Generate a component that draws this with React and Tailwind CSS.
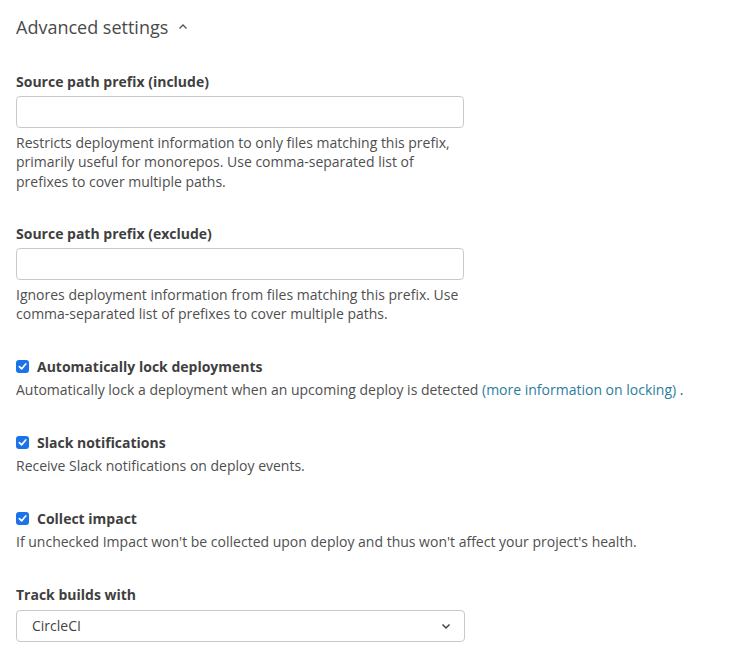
import React from 'react';

const Check = ({ label }) => (
    <label className="flex items-center gap-[8px] font-bold text-[14px] text-[#3f3f3f]">
        <span className="w-[13px] h-[13px] rounded-[3px] bg-[#1a73e8] flex items-center justify-center">
            <svg width="9" height="9" viewBox="0 0 10 10" fill="none">
                <path d="M1.5 5.2 L4 7.6 L8.6 2.2" stroke="white" strokeWidth="1.9" strokeLinecap="round" strokeLinejoin="round" />
            </svg>
        </span>
        {label}
    </label>
);

const App = () => {
    return (
        <div className="px-[16px] pt-[13px] text-[#4f4f4f] text-[14px] leading-[19.5px]" style={{ fontFamily: '"Open Sans", sans-serif' }}>
            <div className="flex items-center gap-[10px] text-[18px] leading-[28px] text-[#4a4a4a]">
                <span>Advanced settings</span>
                <svg width="10" height="8" viewBox="0 0 10 8" fill="none">
                    <path d="M1.5 5.5 L5 2 L8.5 5.5" stroke="#555" strokeWidth="1.3" />
                </svg>
            </div>

            {/* include */}
            <div className="mt-[31px]">
                <div className="font-bold text-[#3f3f3f]">Source path prefix (include)</div>
                <input type="text" className="block mt-[4px] w-[448px] h-[32px] border border-[#c9c9c9] rounded-[4px] bg-white" />
                <p className="mt-[5px] w-[440px]">
                    Restricts deployment information to only files matching this prefix, primarily useful for monorepos. Use comma-separated list of prefixes to cover multiple paths.
                </p>
            </div>

            {/* exclude */}
            <div className="mt-[33px]">
                <div className="font-bold text-[#3f3f3f]">Source path prefix (exclude)</div>
                <input type="text" className="block mt-[4px] w-[448px] h-[32px] border border-[#c9c9c9] rounded-[4px] bg-white" />
                <p className="mt-[5px] w-[450px]">
                    Ignores deployment information from files matching this prefix. Use comma-separated list of prefixes to cover multiple paths.
                </p>
            </div>

            <div className="mt-[33px]">
                <Check label="Automatically lock deployments" />
                <p className="mt-[4px]">
                    Automatically lock a deployment when an upcoming deploy is detected{' '}
                    <a className="text-[#2b7d9c]">(more information on locking)</a> .
                </p>
            </div>

            <div className="mt-[33px]">
                <Check label="Slack notifications" />
                <p className="mt-[4px]">Receive Slack notifications on deploy events.</p>
            </div>

            <div className="mt-[33px]">
                <Check label="Collect impact" />
                <p className="mt-[4px]">If unchecked Impact won't be collected upon deploy and thus won't affect your project's health.</p>
            </div>

            <div className="mt-[33px]">
                <div className="font-bold text-[#3f3f3f]">Track builds with</div>
                <div className="mt-[6px] w-[449px] h-[32px] border border-[#c9c9c9] rounded-[4px] bg-white flex items-center justify-between pl-[15px] pr-[13px]">
                    <span className="text-[#444]">CircleCI</span>
                    <svg width="10" height="7" viewBox="0 0 10 7" fill="none">
                        <path d="M1.5 1.5 L5 5 L8.5 1.5" stroke="#444" strokeWidth="1.5" />
                    </svg>
                </div>
            </div>
        </div>
    );
};

export default App;
